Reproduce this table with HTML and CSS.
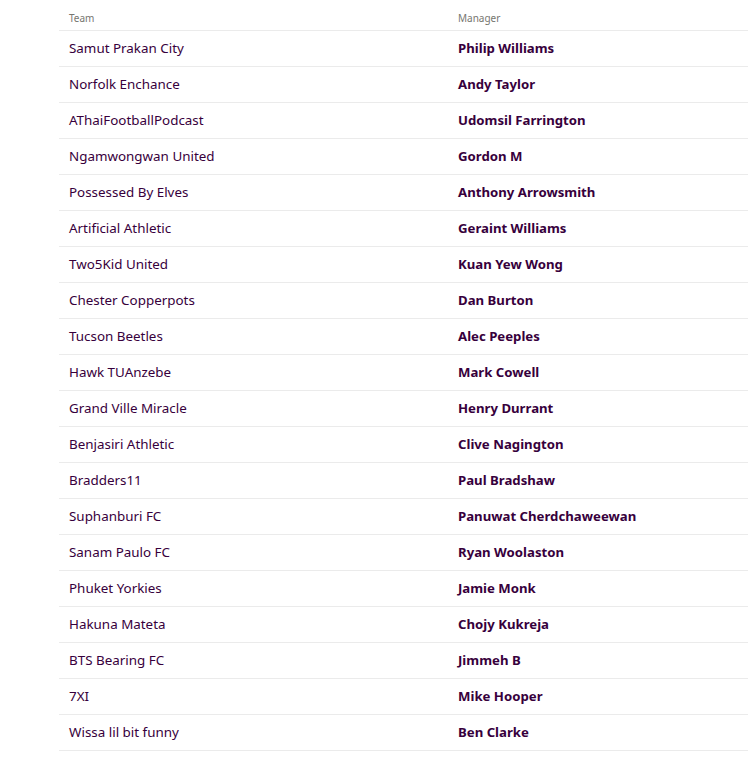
FILE: index.html
```html
<!DOCTYPE html>
<html>
<head>
<meta charset="utf-8">
<link rel="stylesheet" href="styles.css">
</head>
<body>
<div class="standings">
<div class="row head"><div class="cell">Team</div><div class="cell">Manager</div></div>
<div class="row"><div class="cell team">Samut Prakan City</div><div class="cell manager">Philip Williams</div></div>
<div class="row"><div class="cell team">Norfolk Enchance</div><div class="cell manager">Andy Taylor</div></div>
<div class="row"><div class="cell team">AThaiFootballPodcast</div><div class="cell manager">Udomsil Farrington</div></div>
<div class="row"><div class="cell team">Ngamwongwan United</div><div class="cell manager">Gordon M</div></div>
<div class="row"><div class="cell team">Possessed By Elves</div><div class="cell manager">Anthony Arrowsmith</div></div>
<div class="row"><div class="cell team">Artificial Athletic</div><div class="cell manager">Geraint Williams</div></div>
<div class="row"><div class="cell team">Two5Kid United</div><div class="cell manager">Kuan Yew Wong</div></div>
<div class="row"><div class="cell team">Chester Copperpots</div><div class="cell manager">Dan Burton</div></div>
<div class="row"><div class="cell team">Tucson Beetles</div><div class="cell manager">Alec Peeples</div></div>
<div class="row"><div class="cell team">Hawk TUAnzebe</div><div class="cell manager">Mark Cowell</div></div>
<div class="row"><div class="cell team">Grand Ville Miracle</div><div class="cell manager">Henry Durrant</div></div>
<div class="row"><div class="cell team">Benjasiri Athletic</div><div class="cell manager">Clive Nagington</div></div>
<div class="row"><div class="cell team">Bradders11</div><div class="cell manager">Paul Bradshaw</div></div>
<div class="row"><div class="cell team">Suphanburi FC</div><div class="cell manager">Panuwat Cherdchaweewan</div></div>
<div class="row"><div class="cell team">Sanam Paulo FC</div><div class="cell manager">Ryan Woolaston</div></div>
<div class="row"><div class="cell team">Phuket Yorkies</div><div class="cell manager">Jamie Monk</div></div>
<div class="row"><div class="cell team">Hakuna Mateta</div><div class="cell manager">Chojy Kukreja</div></div>
<div class="row"><div class="cell team">BTS Bearing FC</div><div class="cell manager">Jimmeh B</div></div>
<div class="row"><div class="cell team">7XI</div><div class="cell manager">Mike Hooper</div></div>
<div class="row"><div class="cell team">Wissa lil bit funny</div><div class="cell manager">Ben Clarke</div></div>
</div>
</body>
</html>
```
FILE: styles.css
```css
html, body {
  margin: 0;
  padding: 0;
  background: #ffffff;
}
body {
  font-family: "Noto Sans", "Liberation Sans", sans-serif;
  color: #37003c;
  overflow: hidden;
}
.standings {
  margin-left: 59px;
  width: 720px;
}
.row {
  display: grid;
  grid-template-columns: 389px 1fr;
  height: 36px;
  box-sizing: border-box;
  border-bottom: 1px solid #ebebeb;
  align-items: center;
  padding-bottom: 1px;
}
.row.head {
  height: 31px;
  align-items: start;
  padding-bottom: 0;
}
.cell {
  padding: 0 10px;
  white-space: nowrap;
}
.head .cell {
  font-size: 10px;
  color: #76766f;
  padding-top: 11px;
}
.team {
  font-size: 13.4px;
  font-weight: 400;
}
.manager {
  font-size: 13.2px;
  font-weight: 700;
}
```
